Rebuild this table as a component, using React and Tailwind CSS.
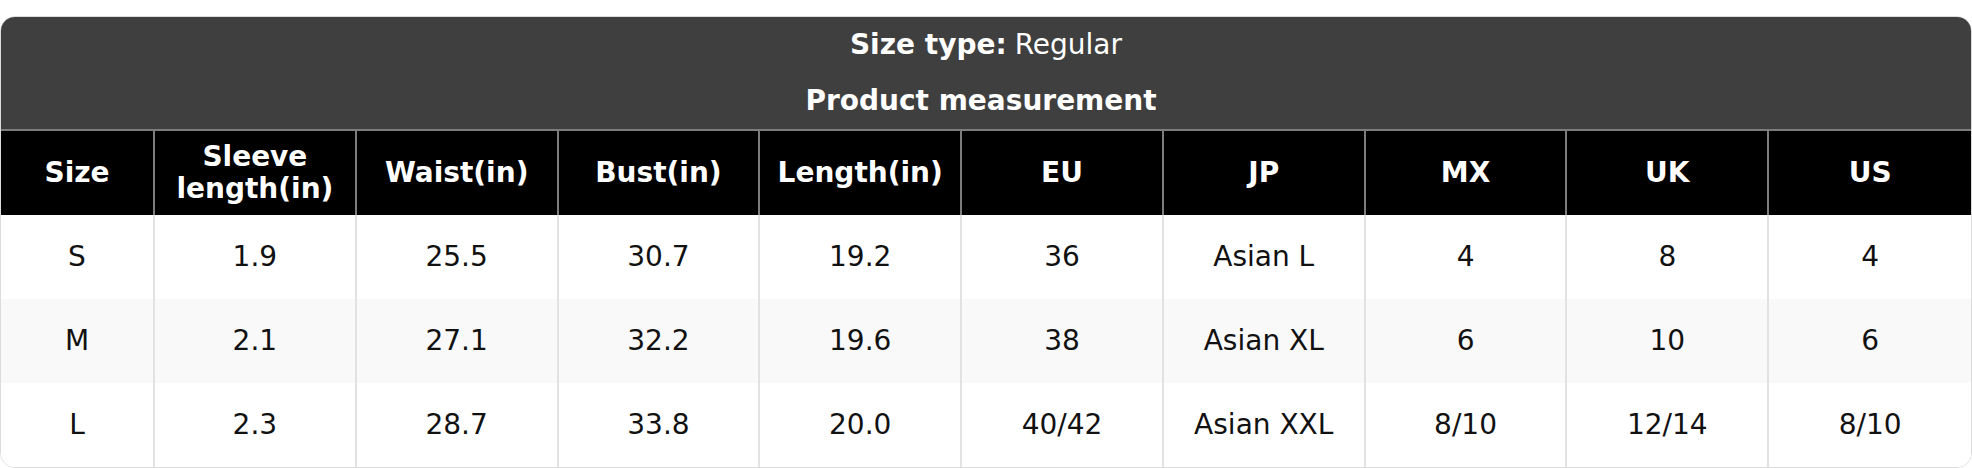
import React from "react";

const headers = ["Size", "Sleeve length(in)", "Waist(in)", "Bust(in)", "Length(in)", "EU", "JP", "MX", "UK", "US"];

const rows = [
  ["S", "1.9", "25.5", "30.7", "19.2", "36", "Asian L", "4", "8", "4"],
  ["M", "2.1", "27.1", "32.2", "19.6", "38", "Asian XL", "6", "10", "6"],
  ["L", "2.3", "28.7", "33.8", "20.0", "40/42", "Asian XXL", "8/10", "12/14", "8/10"],
];

const SizeChart = () => {
  return (
    <div className="pt-4 bg-white" style={{ fontFamily: '"DejaVu Sans", sans-serif' }}>
      <div className="rounded-[15px] overflow-hidden border border-[#dcdcdc] text-[28px] leading-[32px]">
        <div className="bg-[#3f3f3f] text-white text-center">
          <div className="h-14 flex items-center justify-center">
            <span className="font-bold">Size type:</span>
            <span className="ml-2">Regular</span>
          </div>
          <div className="h-14 flex items-center justify-center font-bold pr-[10px]">Product measurement</div>
        </div>
        <div className="grid grid-cols-[154px_repeat(9,1fr)] bg-black text-white font-bold border-t-2 border-[#7d7d7d]">
          {headers.map((h, i) => (
            <div
              key={h}
              className={`h-[84px] flex items-center justify-center text-center px-2 ${i < headers.length - 1 ? "border-r-2 border-[#7d7d7d]" : ""}`}
            >
              {h === "Sleeve length(in)" ? (
                <span>
                  Sleeve
                  <br />
                  length(in)
                </span>
              ) : (
                h
              )}
            </div>
          ))}
        </div>
        {rows.map((r, ri) => (
          <div key={r[0]} className={`grid grid-cols-[154px_repeat(9,1fr)] text-[#111] ${ri === 1 ? "bg-[#f9f9f9]" : "bg-white"}`}>
            {r.map((c, i) => (
              <div
                key={i}
                className={`h-[84px] flex items-center justify-center ${i < r.length - 1 ? "border-r-2 border-[#e2e2e2]" : ""}`}
              >
                {c}
              </div>
            ))}
          </div>
        ))}
      </div>
    </div>
  );
};

export default SizeChart;
